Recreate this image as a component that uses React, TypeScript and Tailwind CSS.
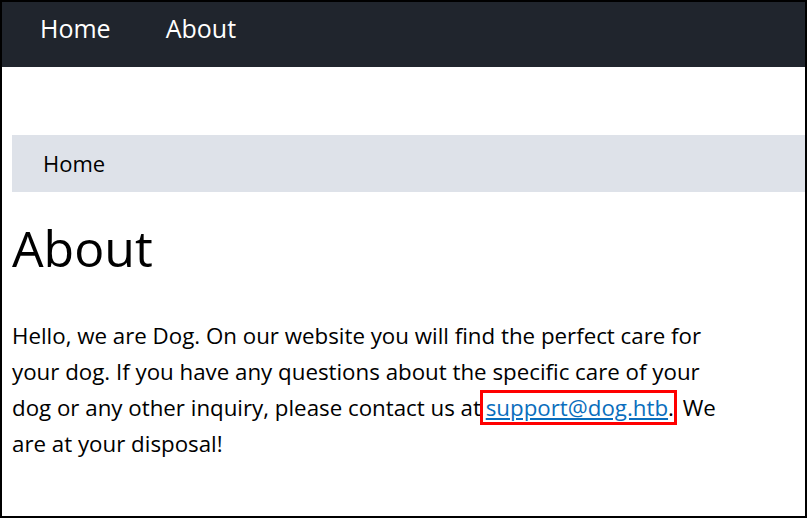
export default function App() {
	return (
		<div
			className="w-[807px] h-[518px] border-2 border-black bg-white overflow-hidden"
			style={{ fontFamily: '"Open Sans", sans-serif' }}
		>
			<nav className="h-[65px] bg-[#20252d] flex items-start pl-[38px] pt-[8px] gap-[55px]">
				<a className="text-[25px] text-white leading-[36px]">Home</a>
				<a className="text-[25px] text-white leading-[36px]">About</a>
			</nav>

			<div className="mt-[68px] ml-[10px] h-[57px] bg-[#dee2e9] flex items-center pl-[31px]">
				<span className="text-[22px] text-black">Home</span>
			</div>

			<h1 className="ml-[10px] mt-[24px] text-[50px] leading-[64px] text-black">About</h1>

			<p className="ml-[10px] mt-[38px] w-[720px] text-[22.3px] leading-[36px] text-black">
				Hello, we are Dog. On our website you will find the perfect care for your dog. If you have
				any questions about the specific care of your dog or any other inquiry, please contact us
				at{' '}
				<span className="inline-block ml-[-7px] border-[3px] border-[#f00] pl-[3px] pr-0 leading-[29px]">
					<a className="text-[#0a6ebd] underline">support@dog.htb</a>.
				</span>{' '}
				We are at your disposal!
			</p>
		</div>
	);
}
